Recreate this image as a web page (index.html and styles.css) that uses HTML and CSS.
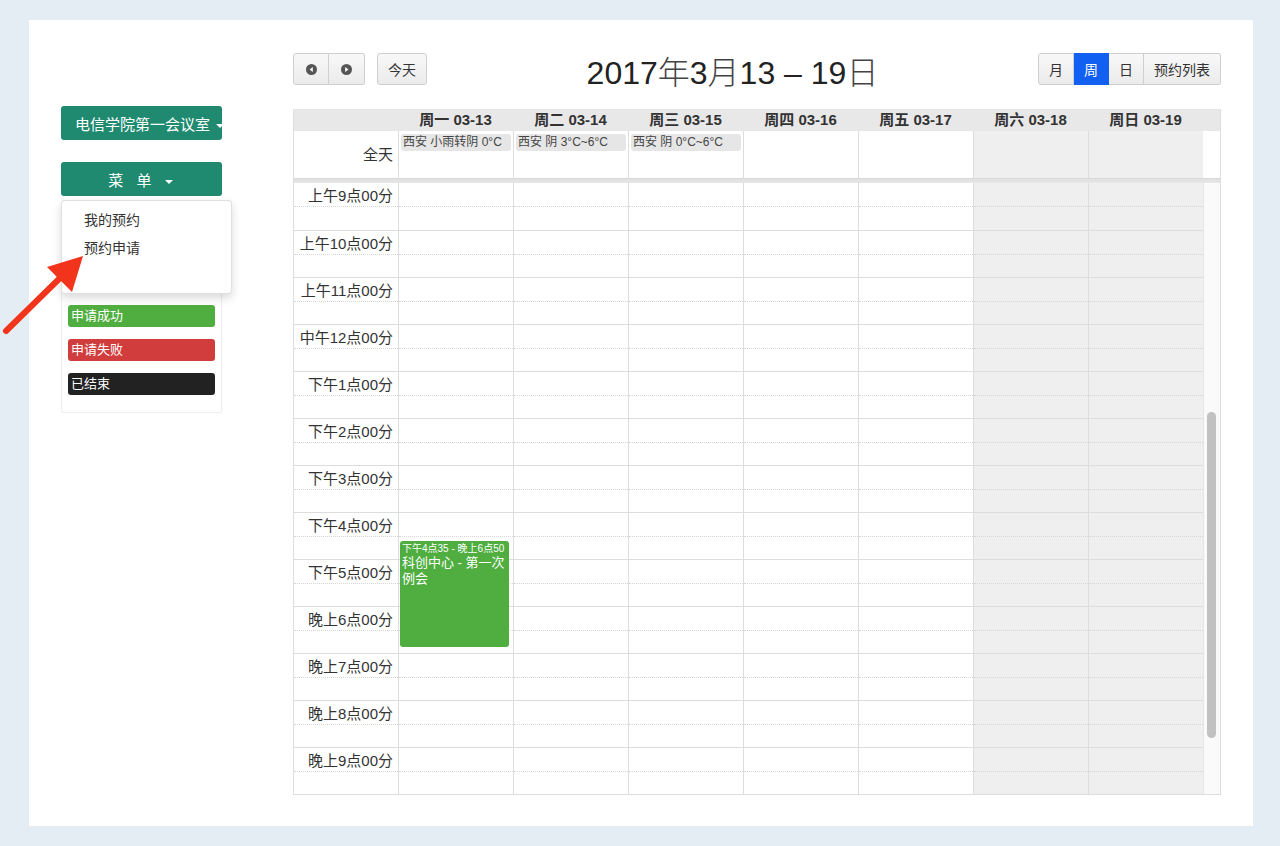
FILE: index.html
```html
<!DOCTYPE html>
<html lang="zh-CN">
<head>
  <meta charset="UTF-8" />
  <title>会议室预约</title>
  <link rel="stylesheet" href="styles.css">
</head>
<body>
  <div class="page">
    <div class="sidebar">
      <button class="side-btn room-btn">电信学院第一会议室 <span class="caret"></span></button>

      <div class="menu-wrap">
        <button class="side-btn menu-btn">菜 单 <span class="caret"></span></button>
        <ul class="dropdown">
          <li>我的预约</li>
          <li>预约申请</li>
        </ul>
      </div>

      <div class="legend">
        <div class="legend-item ok">申请成功</div>
        <div class="legend-item fail">申请失败</div>
        <div class="legend-item done">已结束</div>
      </div>
    </div>

    <div class="calendar">
      <div class="toolbar">
        <div class="tb-left">
          <div class="btn-group">
            <button class="fc-btn icon-btn">
              <svg width="11" height="11" viewBox="0 0 11 11"><circle cx="5.5" cy="5.5" r="5.5" fill="#555"/><path d="M6.8 3 L3.6 5.5 L6.8 8 Z" fill="#fff"/></svg>
            </button>
            <button class="fc-btn icon-btn">
              <svg width="11" height="11" viewBox="0 0 11 11"><circle cx="5.5" cy="5.5" r="5.5" fill="#555"/><path d="M4.2 3 L7.4 5.5 L4.2 8 Z" fill="#fff"/></svg>
            </button>
          </div>
          <button class="fc-btn today-btn">今天</button>
        </div>
        <h2 class="title">2017<span class="cjk">年</span>3<span class="cjk">月</span>13 – 19<span class="cjk">日</span></h2>
        <div class="btn-group">
          <button class="fc-btn">月</button>
          <button class="fc-btn active">周</button>
          <button class="fc-btn">日</button>
          <button class="fc-btn">预约列表</button>
        </div>
      </div>

      <div class="grid">
        <div class="head-row">
          <div class="cell"></div>
          <div class="cell">周一 03-13</div>
          <div class="cell">周二 03-14</div>
          <div class="cell">周三 03-15</div>
          <div class="cell">周四 03-16</div>
          <div class="cell">周五 03-17</div>
          <div class="cell">周六 03-18</div>
          <div class="cell">周日 03-19</div>
          <div class="cell"></div>
        </div>

        <div class="allday-row">
          <div class="cell axis-label">全天</div>
          <div class="cell"><div class="weather">西安 小雨转阴 0°C</div></div>
          <div class="cell"><div class="weather">西安 阴 3°C~6°C</div></div>
          <div class="cell"><div class="weather">西安 阴 0°C~6°C</div></div>
          <div class="cell"></div>
          <div class="cell"></div>
          <div class="cell weekend"></div>
          <div class="cell weekend"></div>
          <div class="cell blank"></div>
        </div>

        <div class="divider"></div>

        <div class="body-row" id="bodyRow">
          <div class="axis" id="axis"></div>
          <div class="scroll"><div class="thumb"></div></div>
        </div>
      </div>
    </div>
  </div>

  <svg class="pointer" width="100" height="340" viewBox="0 0 100 340">
    <line x1="6" y1="331" x2="60" y2="278" stroke="#f2341c" stroke-width="6" stroke-linecap="round"/>
    <polygon points="83,256 47,267 72,292" fill="#f2341c"/>
  </svg>

  <script>
    const labels = ['上午9点00分', '上午10点00分', '上午11点00分', '中午12点00分', '下午1点00分',
      '下午2点00分', '下午3点00分', '下午4点00分', '下午5点00分', '晚上6点00分',
      '晚上7点00分', '晚上8点00分', '晚上9点00分'];

    const axis = document.getElementById('axis');
    const bodyRow = document.getElementById('bodyRow');
    const scroll = bodyRow.querySelector('.scroll');

    labels.forEach(text => {
      const hour = document.createElement('div');
      hour.className = 'hour';
      const span = document.createElement('span');
      span.textContent = text;
      hour.appendChild(span);
      axis.appendChild(hour);
    });

    // seven day columns
    for (let d = 0; d < 7; d++) {
      const col = document.createElement('div');
      col.className = 'day' + (d >= 5 ? ' weekend' : '');
      labels.forEach(() => {
        const hour = document.createElement('div');
        hour.className = 'hour';
        col.appendChild(hour);
      });
      if (d === 0) {
        const ev = document.createElement('div');
        ev.className = 'event';
        ev.innerHTML = '<div class="ev-time">下午4点35 - 晚上6点50</div><div class="ev-title">科创中心 - 第一次例会</div>';
        col.appendChild(ev);
      }
      bodyRow.insertBefore(col, scroll);
    }
  </script>
</body>
</html>
```

FILE: styles.css
```css
body {
  margin: 0;
  background: #e4edf3;
  font-family: "Liberation Sans", "Noto Sans CJK SC", sans-serif;
  color: #333;
}

.page {
  margin: 20px 27px 20px 29px;
  height: 806px;
  background: #fff;
  display: flex;
  box-sizing: border-box;
  padding: 33px 32px 0 32px;
}

/* Sidebar */
.sidebar {
  width: 161px;
  padding-top: 53px;
  margin-right: 71px;
  flex-shrink: 0;
}

.side-btn {
  display: block;
  width: 161px;
  height: 34px;
  background: #1f8a6f;
  color: #fff;
  border: none;
  border-radius: 3px;
  font-family: inherit;
  font-size: 15px;
  cursor: pointer;
  white-space: nowrap;
}

.room-btn {
  text-align: left;
  padding: 0 0 0 14px;
  overflow: visible;
}

.caret {
  display: inline-block;
  width: 0;
  height: 0;
  border-top: 4px solid #fff;
  border-left: 4px solid transparent;
  border-right: 4px solid transparent;
  vertical-align: middle;
  margin-left: 2px;
}

.menu-wrap {
  position: relative;
  margin-top: 22px;
}

.menu-btn {
  letter-spacing: 4.5px;
  padding-left: 4px;
}

.menu-btn .caret {
  margin-left: 0;
}

.dropdown {
  position: absolute;
  top: 38px;
  left: 0;
  width: 171px;
  height: 94px;
  box-sizing: border-box;
  margin: 0;
  padding: 5px 0;
  list-style: none;
  background: #fff;
  border: 1px solid rgba(0, 0, 0, 0.12);
  border-radius: 4px;
  box-shadow: 0 4px 10px rgba(0, 0, 0, 0.15);
  z-index: 5;
}

.dropdown li {
  padding: 0 22px;
  line-height: 28px;
  font-size: 14px;
  color: #333;
}

.legend {
  margin-top: 96px;
  border: 1px solid #eee;
  border-radius: 2px;
  padding: 12px 6px 17px 6px;
}

.legend-item {
  height: 22px;
  line-height: 22px;
  border-radius: 3px;
  color: #fff;
  font-size: 13px;
  padding-left: 3px;
  margin-bottom: 12px;
}

.legend-item:last-child {
  margin-bottom: 0;
}

.ok { background: #4fae3f; }
.fail { background: #d13c3c; }
.done { background: #222; }

/* Calendar */
.calendar {
  width: 928px;
  flex-shrink: 0;
}

.toolbar {
  display: flex;
  align-items: center;
  height: 32px;
  margin-bottom: 24px;
}

.tb-left {
  display: flex;
  align-items: center;
}

.title {
  flex: 1;
  margin: 0;
  text-align: center;
  font-size: 32px;
  font-weight: normal;
  color: #222;
  position: relative;
  top: 1px;
}

.title .cjk {
  font-weight: 300;
  color: #444;
}

.btn-group {
  display: flex;
}

.fc-btn {
  height: 32px;
  padding: 0 10px;
  font-family: inherit;
  font-size: 14px;
  color: #333;
  background: linear-gradient(#f8f8f8, #ebebeb);
  border: 1px solid #cfcfcf;
  border-radius: 0;
  cursor: pointer;
}

.btn-group .fc-btn + .fc-btn {
  border-left: none;
}

.btn-group .fc-btn:first-child {
  border-radius: 3px 0 0 3px;
}

.btn-group .fc-btn:last-child {
  border-radius: 0 3px 3px 0;
}

.fc-btn.active {
  background: #1160f2;
  border-color: #1160f2;
  color: #fff;
}

.icon-btn {
  width: 36px;
  padding: 0;
}

.icon-btn svg {
  display: block;
  margin: 0 auto;
}

.today-btn {
  margin-left: 12px;
  border-radius: 3px;
  width: 50px;
  padding: 0;
}

.grid {
  border: 1px solid #ddd;
  border-top: none;
}

.head-row,
.allday-row,
.body-row {
  display: grid;
  grid-template-columns: 104px repeat(7, 1fr) 17px;
}

.head-row {
  background: #e8e8e8;
  height: 22px;
}

.head-row .cell {
  text-align: center;
  font-size: 15px;
  font-weight: bold;
  line-height: 22px;
  color: #333;
}

.allday-row {
  height: 47px;
}

.allday-row .cell {
  border-left: 1px solid #ddd;
  padding: 3px 2px 0 2px;
}

.allday-row .cell:first-child {
  border-left: none;
}

.allday-row .blank {
  border-left: none;
}

.axis-label {
  text-align: right;
  font-size: 15px;
  line-height: 42px;
  padding-right: 5px !important;
}

.weather {
  background: #e6e6e6;
  border-radius: 3px;
  font-size: 12px;
  color: #444;
  line-height: 17px;
  padding-left: 2px;
  white-space: nowrap;
  overflow: hidden;
}

.divider {
  height: 3px;
  background: #e3e3e3;
  border-top: 1px solid #d8d8d8;
  border-bottom: 1px solid #e8e8e8;
}

.body-row {
  height: 611px;
}

.weekend {
  background: #efefef;
}

.hour {
  height: 47px;
  box-sizing: border-box;
  border-top: 1px solid #ddd;
  position: relative;
}

.hour:first-child {
  border-top: none;
}

.hour::after {
  content: '';
  position: absolute;
  left: 0;
  right: 0;
  top: 23px;
  border-top: 1px dotted #d6d6d6;
}

.axis .hour span {
  display: block;
  text-align: right;
  padding: 1px 5px 0 0;
  font-size: 15px;
  line-height: 23px;
}

.day {
  border-left: 1px solid #ddd;
  position: relative;
}

.event {
  position: absolute;
  top: 358px;
  left: 1px;
  right: 4px;
  height: 106px;
  background: #4fae3f;
  border-radius: 3px;
  color: #fff;
  padding: 2px 2px;
  box-sizing: border-box;
  overflow: hidden;
  z-index: 2;
}

.ev-time {
  font-size: 10px;
  line-height: 12px;
  white-space: nowrap;
  overflow: hidden;
}

.ev-title {
  font-size: 13px;
  line-height: 16px;
}

.scroll {
  border-left: 1px solid #e6e6e6;
  background: #fafafa;
  position: relative;
}

.thumb {
  position: absolute;
  left: 3px;
  top: 229px;
  width: 9px;
  height: 326px;
  background: #c1c1c1;
  border-radius: 5px;
}

.pointer {
  position: absolute;
  left: 0;
  top: 0;
  z-index: 10;
  pointer-events: none;
}
```
